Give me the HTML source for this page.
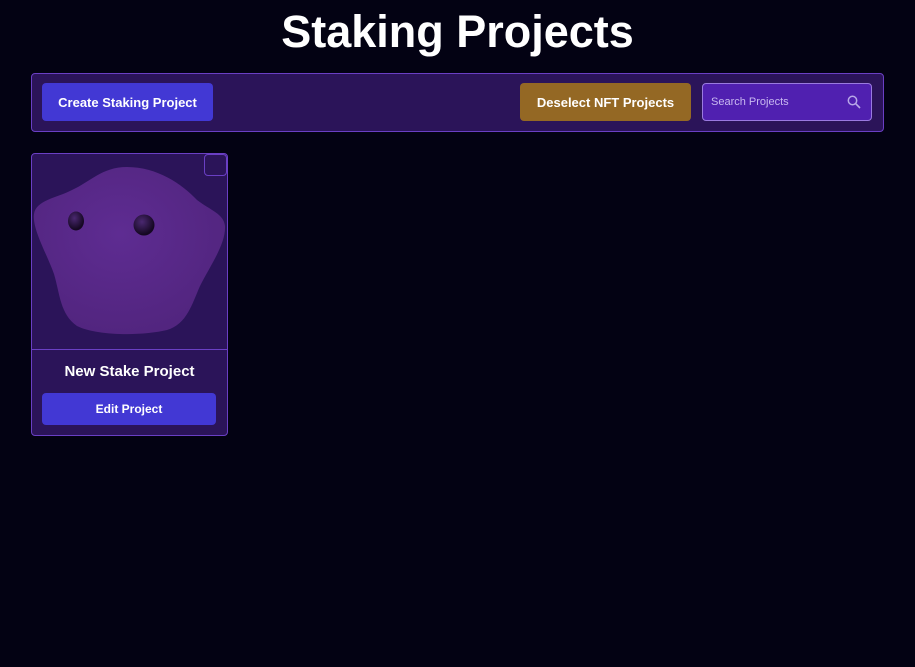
<!DOCTYPE html>
<html><head><style>
body{margin:0;background:#030213;width:915px;height:667px;overflow:hidden;font-family:"Liberation Sans",sans-serif;color:#fff;position:relative}
h1{position:absolute;top:3px;left:0;width:915px;text-align:center;margin:0;font-size:45px;font-weight:bold;line-height:58px}
.bar{position:absolute;left:31px;top:73px;width:851px;height:57px;background:#2b1459;border:1px solid #6a3fc4;border-radius:4px}
.btn{position:absolute;border-radius:4px;font-weight:bold;font-size:13px;display:flex;align-items:center;justify-content:center;color:#fff}
.card{position:absolute;left:31px;top:153px;width:195px;height:281px;background:#2b1459;border:1px solid #6a3fc4;border-radius:4px;overflow:hidden}
</style></head><body>
<h1>Staking Projects</h1>
<div class="bar">
<div class="btn" style="left:10px;top:9px;width:171px;height:38px;background:#4238d4">Create Staking Project</div>
<div class="btn" style="left:488px;top:9px;width:171px;height:38px;background:#946824">Deselect NFT Projects</div>
<div style="position:absolute;left:670px;top:9px;background:#5020b0;border:1px solid #9a7ae0;border-radius:4px;font-size:11px;color:#c8b8f0;line-height:36px;padding-left:8px;box-sizing:border-box;width:170px;height:38px">Search Projects
<svg style="position:absolute;right:10px;top:11px" width="14" height="14" viewBox="0 0 14 14"><circle cx="5.5" cy="5.5" r="4.2" fill="none" stroke="#b8a8e8" stroke-width="1.5"/><path d="M8.6 8.6L13 13" stroke="#b8a8e8" stroke-width="1.6"/></svg></div>
</div>
<div class="card">
<svg width="195" height="195" viewBox="0 0 195 195" style="position:absolute;left:0;top:0">
<defs><radialGradient id="g" cx="0.45" cy="0.4" r="0.6"><stop offset="0" stop-color="#5e2c92"/><stop offset="1" stop-color="#52257f"/></radialGradient>
<radialGradient id="e" cx="0.4" cy="0.35" r="0.6"><stop offset="0" stop-color="#4a2870"/><stop offset="1" stop-color="#150822"/></radialGradient></defs>
<path d="M95 13C70 13 58 28 40 36C25 44 4 46 2 60C0 75 15 100 22 120C28 140 28 160 45 172C65 182 110 182 135 176C155 170 160 150 168 132C178 112 194 90 193 72C192 60 178 56 165 46C150 30 125 13 95 13Z" fill="url(#g)"/>
<ellipse cx="44" cy="67" rx="8" ry="9.5" fill="url(#e)"/>
<circle cx="112" cy="71" r="10.5" fill="url(#e)"/>
</svg>
<div style="position:absolute;right:0;top:0;width:21px;height:20px;border:1px solid #6a3fc4;border-radius:4px"></div>
<div style="position:absolute;left:0;top:195px;width:195px;border-top:1px solid #6a3fc4"></div>
<div style="position:absolute;left:0;top:209px;width:195px;text-align:center;font-weight:bold;font-size:15px">New Stake Project</div>
<div class="btn" style="left:10px;top:239px;width:174px;height:32px;background:#4238d4;font-size:12px">Edit Project</div>
</div>
</body></html>
